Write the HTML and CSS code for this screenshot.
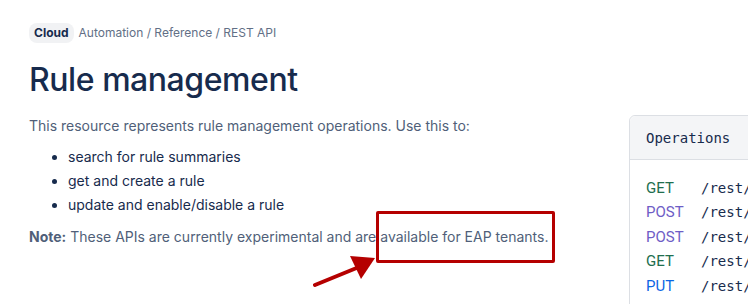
FILE: index.html
```html
<!DOCTYPE html>
<html lang="en">
<head>
<meta charset="utf-8">
<title>Rule management</title>
<link rel="stylesheet" href="styles.css">
</head>
<body>
<div class="page">
  <main class="content">
    <nav class="crumbs">
      <span class="badge">Cloud</span>
      <span class="trail">Automation / Reference / REST API</span>
    </nav>
    <h1 class="title">Rule management</h1>
    <p class="lead">This resource represents rule management operations. Use this to:</p>
    <ul class="uses">
      <li>search for rule summaries</li>
      <li>get and create a rule</li>
      <li>update and enable/disable a rule</li>
    </ul>
    <p class="note"><strong>Note:</strong> These APIs are currently experimental and are available for EAP tenants.</p>
  </main>
  <aside class="ops">
    <div class="ops-head">Operations</div>
    <div class="ops-body">
      <div class="op"><span class="m get">GET</span><span class="path">/rest/api/1.0/rule/summary</span></div>
      <div class="op"><span class="m post">POST</span><span class="path">/rest/api/1.0/rule</span></div>
      <div class="op"><span class="m post">POST</span><span class="path">/rest/api/1.0/rule/search</span></div>
      <div class="op"><span class="m get">GET</span><span class="path">/rest/api/1.0/rule/{id}</span></div>
      <div class="op"><span class="m put">PUT</span><span class="path">/rest/api/1.0/rule/{id}</span></div>
      <div class="op"><span class="m put">PUT</span><span class="path">/rest/api/1.0/rule/{id}/state</span></div>
    </div>
  </aside>
  <div class="mark-box"></div>
  <svg class="mark-arrow" width="70" height="40" viewBox="0 0 70 40">
    <line x1="2" y1="34" x2="46" y2="16" stroke="#b50000" stroke-width="4" stroke-linecap="round"/>
    <polygon points="62,7 37,5 48,28" fill="#b50000"/>
  </svg>
</div>
</body>
</html>
```

FILE: styles.css
```css
html, body {
  margin: 0;
  padding: 0;
  background: #ffffff;
}
body {
  font-family: Inter, "Noto Sans", sans-serif;
  color: #505f79;
  overflow: hidden;
}
.page {
  position: relative;
  display: flex;
  width: 748px;
  height: 304px;
  overflow: hidden;
}
.content {
  width: 600px;
  flex: none;
  padding: 23px 0 0 29px;
  box-sizing: border-box;
}
.crumbs {
  display: flex;
  align-items: center;
  gap: 5px;
  font-size: 12px;
  line-height: 20px;
}
.badge {
  background: #f1f2f4;
  color: #172b4d;
  font-weight: 700;
  border-radius: 8px;
  padding: 0 5px;
  height: 20px;
}
.trail {
  color: #626f86;
}
.title {
  margin: 17px 0 0;
  font-size: 32px;
  line-height: 40px;
  font-weight: 500;
  color: #172b4d;
  letter-spacing: -0.45px;
}
.lead {
  margin: 14px 0 0;
  font-size: 14px;
  line-height: 24px;
}
.uses {
  margin: 7px 0 0;
  padding-left: 39px;
  font-size: 14px;
  line-height: 24px;
  color: #172b4d;
}
.note {
  margin: 8px 0 0;
  font-size: 14px;
  line-height: 24px;
}
.ops {
  margin-top: 115px;
  margin-left: 29px;
  width: 300px;
  flex: none;
  border: 1px solid #dcdfe4;
  border-radius: 6px;
  height: 260px;
}
.ops-head {
  background: #f4f5f7;
  border-bottom: 1px solid #dcdfe4;
  border-radius: 6px 6px 0 0;
  height: 44px;
  box-sizing: border-box;
  padding: 12px 16px;
  font-family: "DejaVu Sans Mono", monospace;
  font-size: 14px;
  line-height: 20px;
  color: #172b4d;
}
.ops-body {
  padding: 16px 16px;
}
.op {
  display: grid;
  grid-template-columns: 55px 1fr;
  font-family: "DejaVu Sans Mono", monospace;
  font-size: 14px;
  line-height: 24.4px;
  color: #172b4d;
}
.m {
  font-family: Roboto, sans-serif;
  font-size: 15px;
}
.get { color: #216e4e; }
.post { color: #6e5dc6; }
.put { color: #0c66e4; }
.mark-box {
  position: absolute;
  left: 376px;
  top: 211px;
  width: 179px;
  height: 52px;
  box-sizing: border-box;
  border: 3px solid #b50000;
  border-radius: 2px;
}
.mark-arrow {
  position: absolute;
  left: 313px;
  top: 251px;
}
```
